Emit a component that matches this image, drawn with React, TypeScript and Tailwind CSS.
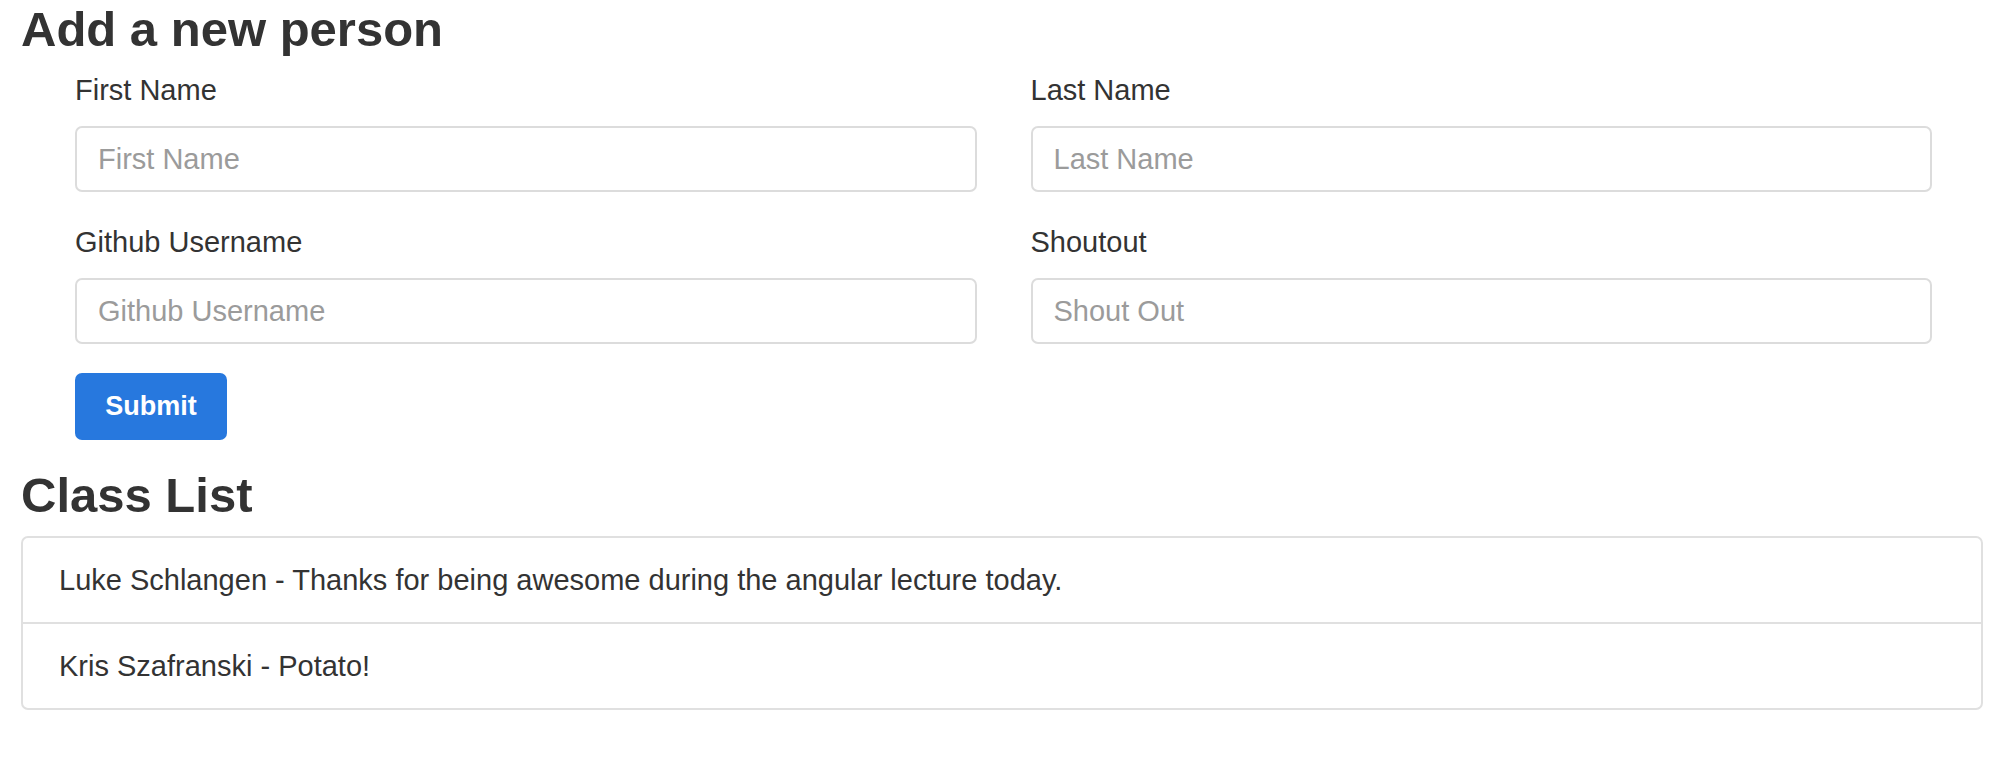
import { useState } from "react";

type Person = {
  firstName: string;
  lastName: string;
  shoutout: string;
};

const Field = ({
  label,
  placeholder,
}: {
  label: string;
  placeholder: string;
}) => {
  const [value, setValue] = useState("");
  return (
    <div className="flex flex-col">
      <label className="text-[29px] leading-[42px] mb-[15px]">{label}</label>
      <input
        type="text"
        placeholder={placeholder}
        value={value}
        onChange={(e) => setValue(e.target.value)}
        className="h-[66px] w-full rounded-[7px] border-2 border-[#dcdcdc] bg-white px-[21px] text-[29px] text-[#333] outline-none placeholder:text-[#9b9b9b]"
      />
    </div>
  );
};

const App = () => {
  const [people] = useState<Person[]>([
    {
      firstName: "Luke",
      lastName: "Schlangen",
      shoutout: "Thanks for being awesome during the angular lecture today.",
    },
    { firstName: "Kris", lastName: "Szafranski", shoutout: "Potato!" },
  ]);

  return (
    <div className="min-h-screen bg-white pl-[21px] pr-[17px] text-[#333] font-['Liberation_Sans',Arial,sans-serif]">
      <h3 className="text-[49px] leading-[58px] font-bold mb-[11px]">
        Add a new person
      </h3>
      <form
        className="pl-[54px] pr-[51px]"
        onSubmit={(e) => {
          e.preventDefault();
        }}
      >
        <div className="grid grid-cols-2 gap-x-[54px] gap-y-[29px]">
          <Field label="First Name" placeholder="First Name" />
          <Field label="Last Name" placeholder="Last Name" />
          <Field label="Github Username" placeholder="Github Username" />
          <Field label="Shoutout" placeholder="Shout Out" />
        </div>
        <button
          type="submit"
          className="mt-[29px] h-[67px] w-[152px] rounded-[7px] bg-[#2778de] text-[27px] font-bold text-white"
        >
          Submit
        </button>
      </form>
      <h3 className="mt-[26px] text-[49px] leading-[58px] font-bold mb-[12px]">
        Class List
      </h3>
      <ul className="rounded-[7px] border-2 border-[#e0e0e0]">
        {people.map((person, i) => (
          <li
            key={i}
            className={`px-[36px] py-[21px] text-[29px] leading-[42px] ${
              i > 0 ? "border-t-2 border-[#e0e0e0]" : ""
            }`}
          >
            {person.firstName} {person.lastName} - {person.shoutout}
          </li>
        ))}
      </ul>
    </div>
  );
};

export default App;
